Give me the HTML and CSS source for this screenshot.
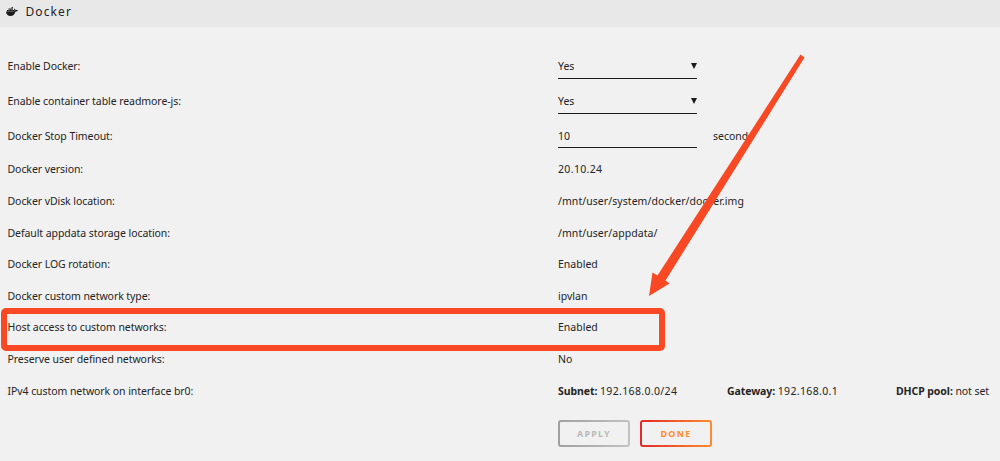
FILE: index.html
```
<!DOCTYPE html>
<html lang="en">

<head>
    <meta charset="UTF-8">
    <meta name="viewport" content="width=device-width, initial-scale=1.0">
    <title>Docker</title>
    <link rel="stylesheet" href="styles.css">
</head>

<body>
    <div class="title">
        <svg class="docker-icon" viewBox="0 0 24 18">
            <path d="M0 9h16c1-1 1-3 0-4l1-2c1 1 2 2 2 3.500 1-.4 3.500-.4 5 .3-.8 1.700-3 2.200-5 2.200C18 14.500 14 18 9 18 4 18 0 14.500 0 9z" />
            <path d="M2 6h2.700v3H2zM5 6h2.700v3H5zM8 6h2.700v3H8zM11 6h2.700v3H11zM14 6h2.500v3H14zM5 3h2.700v2.700H5zM8 3h2.700v2.700H8zM11 3h2.700v2.700H11zM11 0h2.700v2.700H11z" />
        </svg>
        <span>Docker</span>
    </div>

    <form class="settings">
        <div class="row tall">
            <label>Enable Docker:</label>
            <div class="field select"><span>Yes</span><i class="caret"></i></div>
        </div>
        <div class="row tall">
            <label>Enable container table readmore-js:</label>
            <div class="field select"><span>Yes</span><i class="caret"></i></div>
        </div>
        <div class="row tall">
            <label>Docker Stop Timeout:</label>
            <div class="field">10</div>
            <span class="unit">seconds</span>
        </div>
        <div class="row">
            <label>Docker version:</label>
            <span class="num">20.10.24</span>
        </div>
        <div class="row">
            <label>Docker vDisk location:</label>
            <span class="path">/mnt/user/system/docker/docker.img</span>
        </div>
        <div class="row">
            <label>Default appdata storage location:</label>
            <span class="path">/mnt/user/appdata/</span>
        </div>
        <div class="row">
            <label>Docker LOG rotation:</label>
            <span>Enabled</span>
        </div>
        <div class="row">
            <label>Docker custom network type:</label>
            <span>ipvlan</span>
        </div>
        <div class="row">
            <label>Host access to custom networks:</label>
            <span>Enabled</span>
        </div>
        <div class="row">
            <label>Preserve user defined networks:</label>
            <span>No</span>
        </div>
        <div class="row">
            <label>IPv4 custom network on interface br0:</label>
            <div class="network">
                <span><b>Subnet:</b> <span class="num">192.168.0.0/24</span></span>
                <span><b>Gateway:</b> <span class="num">192.168.0.1</span></span>
                <span><b>DHCP pool:</b> not set</span>
            </div>
        </div>
        <div class="buttons">
            <button type="button" class="apply" disabled>APPLY</button>
            <button type="button" class="done">DONE</button>
        </div>
    </form>

    <div class="highlight"></div>
    <svg class="arrow" viewBox="0 0 160 245">
        <path d="M151.500 4.500L155.500 7.500 16.500 230.500 20.500 233.500 0 246 3.500 222.500 8.500 225.500z" />
    </svg>
</body>

</html>
```
FILE: styles.css
```
body {
    margin: 0;
    height: 461px;
    overflow: hidden;
    position: relative;
    background: #f1f1f1;
    color: #242424;
    font-family: "Noto Sans", sans-serif;
    font-size: 10.5px;
}

.title {
    display: flex;
    align-items: center;
    box-sizing: border-box;
    height: 27px;
    padding: 0 6px 4px;
    background: #e8e8e8;
    font-size: 12px;
    letter-spacing: 1.1px;
}

.docker-icon {
    width: 12px;
    height: 9px;
    margin-right: 7.500px;
    fill: #1c1b1b;
}

.settings {
    padding: 21px 0 0 7.500px;
}

.row {
    display: flex;
    align-items: center;
    height: 31.600px;
    position: relative;
    top: 0.6px;
    white-space: nowrap;
}

.tall {
    height: 35px;
    top: 0;
}

.row label {
    flex: 0 0 550.500px;
    letter-spacing: -0.07px;
}

.field {
    display: flex;
    align-items: center;
    justify-content: space-between;
    box-sizing: border-box;
    width: 139px;
    height: 25px;
    padding-top: 2px;
    border-bottom: 1px solid #1c1b1b;
}

.select {
    height: 27px;
}

.caret {
    border: 3px solid transparent;
    border-top: 6px solid #1c1b1b;
    border-bottom: 0;
}

.unit {
    margin-left: 16px;
}

.num {
    letter-spacing: 0.35px;
}

.path {
    letter-spacing: 0.06px;
}

.network {
    display: grid;
    grid-template-columns: 169px 169px auto;
    letter-spacing: -0.08px;
}

.buttons {
    display: flex;
    gap: 10px;
    margin: 14px 0 0 550.500px;
}

button {
    width: 72px;
    height: 27px;
    padding: 1px 0 0;
    border: 2px solid transparent;
    border-radius: 3px;
    font-family: inherit;
    font-size: 9px;
    font-weight: bold;
    letter-spacing: 1.2px;
}

.apply {
    color: #b9b9b9;
    background: linear-gradient(#f1f1f1, #f1f1f1) padding-box, linear-gradient(90deg, #a0a0a0, #c2c2c2) border-box;
}

.done {
    color: #ff8c2f;
    background: linear-gradient(#f1f1f1, #f1f1f1) padding-box, linear-gradient(90deg, #e22828, #ff8c2f) border-box;
}

.highlight {
    position: absolute;
    left: 1px;
    top: 308px;
    width: 652px;
    height: 31px;
    border: 6px solid #f84824;
    border-radius: 5px;
}

.arrow {
    position: absolute;
    left: 649px;
    top: 50px;
    width: 160px;
    height: 245px;
    overflow: visible;
    fill: #f84824;
}
```
